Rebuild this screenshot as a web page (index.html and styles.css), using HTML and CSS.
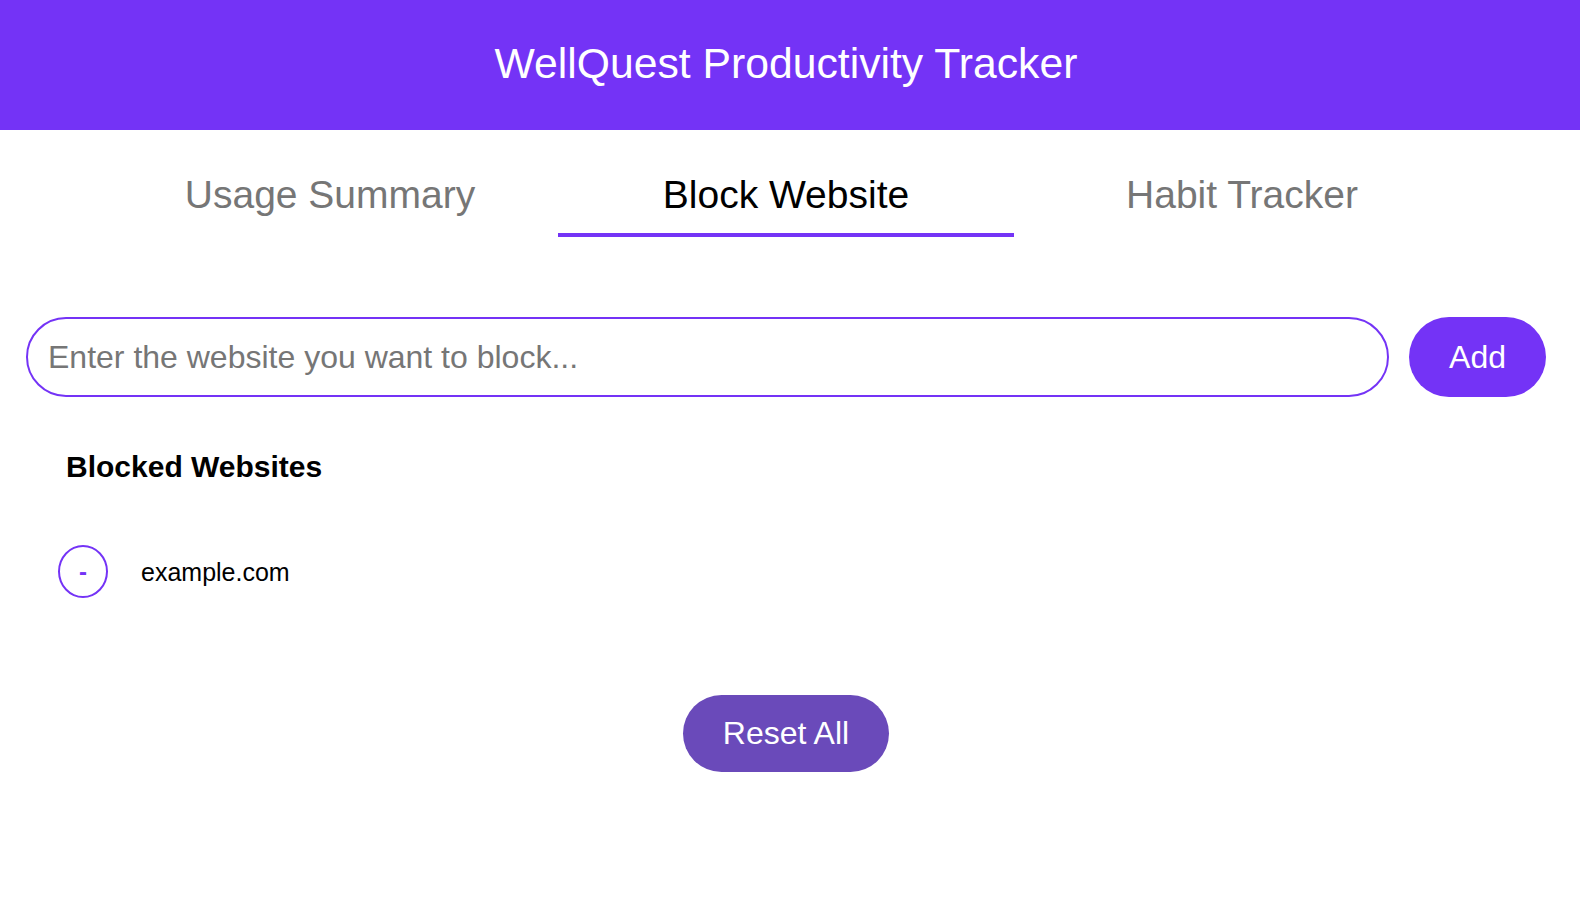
FILE: index.html
```html
<!DOCTYPE html>
<html lang="en">
<head>
<meta charset="utf-8">
<title>WellQuest Productivity Tracker</title>
<link rel="stylesheet" href="styles.css">
</head>
<body>
<header class="app-header">
  <h1 class="app-title">WellQuest Productivity Tracker</h1>
</header>
<main class="content">
  <nav class="tabs">
    <div class="tab">Usage Summary</div>
    <div class="tab tab-active">Block Website</div>
    <div class="tab">Habit Tracker</div>
  </nav>
  <form class="add-form">
    <input class="site-input" type="text" placeholder="Enter the website you want to block...">
    <button type="button" class="add-btn">Add</button>
  </form>
  <section class="blocked">
    <h2 class="blocked-title">Blocked Websites</h2>
    <ul class="blocked-list">
      <li class="blocked-item">
        <button type="button" class="remove-btn">-</button>
        <span class="site-name">example.com</span>
      </li>
    </ul>
  </section>
  <div class="reset-row">
    <button type="button" class="reset-btn">Reset All</button>
  </div>
</main>
</body>
</html>
```

FILE: styles.css
```css
* { box-sizing: border-box; }
html, body { margin: 0; padding: 0; background: #ffffff; }
body {
  font-family: "Liberation Sans", Arial, sans-serif;
  color: #000;
}
.app-header {
  height: 130px;
  background: #7433f6;
  display: flex;
  align-items: center;
  justify-content: center;
  padding-right: 8px;
}
.app-title {
  margin: 0;
  color: #ffffff;
  font-weight: 400;
  font-size: 42.7px;
  line-height: 50px;
  padding-bottom: 4px;
}
.content {
  padding: 0 34px 0 26px;
}
.tabs {
  display: grid;
  grid-template-columns: 1fr 1fr 1fr;
  margin: 42px 76px 0;
}
.tab {
  text-align: center;
  font-size: 39px;
  line-height: 46px;
  color: #767676;
  padding-bottom: 15px;
  border-bottom: 4px solid transparent;
}
.tab-active {
  color: #000;
  border-bottom-color: #7433f6;
}
.add-form {
  display: flex;
  gap: 20px;
  margin-top: 80px;
}
.site-input {
  flex: 1;
  height: 80px;
  border: 2px solid #7433f6;
  border-radius: 40px;
  padding: 0 20px;
  font-family: "Liberation Sans", Arial, sans-serif;
  font-size: 32px;
  color: #000;
  outline: none;
  background: #fff;
}
.site-input::placeholder { color: #767676; }
.add-btn {
  height: 80px;
  border: none;
  border-radius: 40px;
  background: #7433f6;
  color: #fff;
  font-family: "Liberation Sans", Arial, sans-serif;
  font-size: 32px;
  padding: 0 40px;
}
.blocked {
  padding-left: 32px;
}
.blocked-title {
  margin: 53px 0 0 8px;
  font-size: 30px;
  line-height: 34px;
  font-weight: 700;
}
.blocked-list {
  list-style: none;
  margin: 61px 0 0;
  padding: 0;
}
.blocked-item {
  display: flex;
  align-items: center;
  gap: 33px;
}
.remove-btn {
  width: 50px;
  height: 53px;
  border: 2px solid #7433f6;
  border-radius: 50%;
  background: #fff;
  color: #7433f6;
  font-family: "Liberation Sans", Arial, sans-serif;
  font-size: 24px;
  font-weight: 700;
  padding: 0;
}
.site-name {
  font-size: 25px;
  margin-top: 1px;
}
.reset-row {
  display: flex;
  justify-content: center;
  margin-top: 97px;
}
.reset-btn {
  height: 77px;
  border: none;
  border-radius: 39px;
  background: #6a4aba;
  color: #fff;
  font-family: "Liberation Sans", Arial, sans-serif;
  font-size: 32px;
  padding: 0 40px;
}
```
